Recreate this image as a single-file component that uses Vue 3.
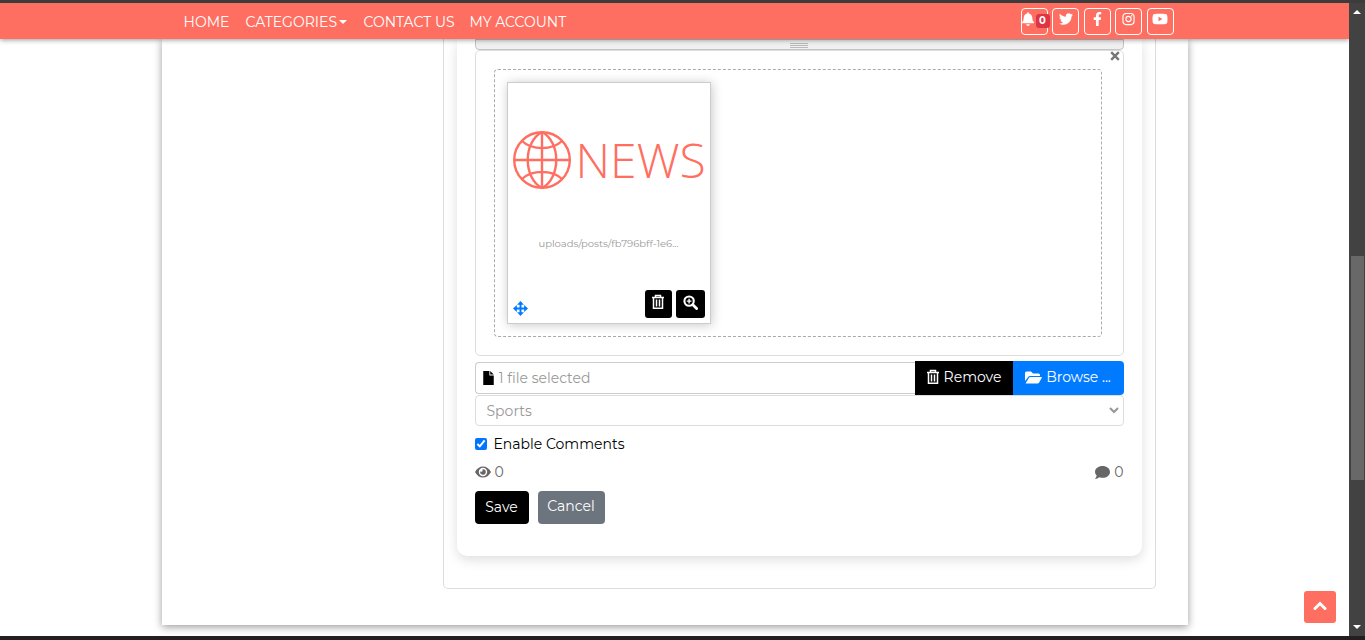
<script setup>
import { ref } from 'vue'

const enableComments = ref(true)
const category = ref('Sports')

const socials = [
  { name: 'Twitter', width: 14, box: '0 0 512 512', d: 'M459 152c0 5 0 9 0 14 0 139-106 299-299 299-59 0-115-17-161-47 8 1 16 1 25 1 49 0 94-17 130-45-46-1-85-31-98-73 7 1 13 2 20 2 9 0 19-1 28-4-48-10-84-52-84-103v-1c14 8 30 13 47 13-28-19-47-51-47-87 0-19 5-37 14-53 52 64 130 105 217 110-2-8-3-16-3-24 0-58 47-105 105-105 30 0 58 13 77 33 24-5 46-13 67-25-8 24-24 45-46 58 21-2 42-8 61-16-14 21-32 39-53 53z' },
  { name: 'Facebook', width: 9, box: '0 0 320 512', d: 'M279 288l14-93h-89v-60c0-25 12-50 52-50h41V7S260 0 225 0c-73 0-121 44-121 125v70H23v93h81v224h100V288z' },
  { name: 'Instagram', width: 13, box: '0 0 448 512', d: 'M224 141a115 115 0 1 0 0 230 115 115 0 0 0 0-230zm0 190a75 75 0 1 1 0-150 75 75 0 0 1 0 150zM371 136a27 27 0 1 1-54 0 27 27 0 0 1 54 0zM132 32h184c75 0 132 57 132 132v184c0 75-57 132-132 132H132C57 480 0 423 0 348V164C0 89 57 32 132 32zm8 42c-60 0-98 38-98 98v168c0 60 38 98 98 98h168c60 0 98-38 98-98V172c0-60-38-98-98-98z' },
  { name: 'YouTube', width: 16, box: '0 0 576 512', d: 'M550 124c-6-24-25-42-49-49C458 64 288 64 288 64S118 64 75 75c-24 7-43 25-49 49-12 43-12 132-12 132s0 90 12 133c6 23 25 41 49 47 43 12 213 12 213 12s170 0 213-12c24-6 43-24 49-47 12-43 12-133 12-133s0-89-12-132zM232 338V175l143 81z' }
]
</script>

<template>
  <div class="screen">
    <div class="viewport">
      <header class="navbar">
        <div class="navbar-inner">
          <nav class="menu">
            <a href="#">HOME</a>
            <a href="#">CATEGORIES<span class="caret"></span></a>
            <a href="#">CONTACT US</a>
            <a href="#">MY ACCOUNT</a>
          </nav>
          <div class="socials">
            <a href="#" class="social bell" aria-label="Notifications">
              <svg viewBox="0 0 448 512" width="12" height="14"><path fill="currentColor" d="M224 512c35 0 64-29 64-64H160c0 35 29 64 64 64zm215-150c-19-20-55-51-55-154 0-77-54-139-128-154V32a32 32 0 1 0-64 0v22C118 69 64 131 64 208c0 103-36 134-55 154-6 6-9 14-9 22 0 16 13 32 32 32h384c19 0 32-16 32-32 0-8-3-16-9-22z" /></svg>
              <span class="badge">0</span>
            </a>
            <a v-for="s in socials" :key="s.name" href="#" class="social" :aria-label="s.name">
              <svg :viewBox="s.box" :width="s.width" height="14"><path fill="currentColor" fill-rule="evenodd" :d="s.d" /></svg>
            </a>
          </div>
        </div>
      </header>

      <main class="page">
        <section class="panel">
          <form class="card" @submit.prevent>
            <div class="editor-foot"><span class="grip"></span></div>

            <div class="preview">
              <button type="button" class="close" aria-label="Close">
                <svg viewBox="0 0 10 10" width="10" height="10"><path d="M1.2 1.2l7.600 7.600M8.800 1.200l-7.600 7.600" stroke="currentColor" stroke-width="2.400" /></svg>
              </button>
              <div class="dropzone">
                <figure class="thumb">
                  <div class="logo">
                    <svg viewBox="1 1 58 58" width="58" height="58" fill="none" stroke="currentColor" stroke-width="2.400">
                      <circle cx="30" cy="30" r="27.800" />
                      <path d="M30 2C11 12 11 48 30 58M30 2c19 10 19 46 0 56" />
                      <path d="M30 2v56M2 30h56M10 11c10 9.500 30 9.500 40 0M10 49c10-9.500 30-9.500 40 0" />
                    </svg>
                    <span>NEWS</span>
                  </div>
                  <figcaption>uploads/posts/fb796bff-1e6...</figcaption>
                  <div class="thumb-foot">
                    <svg class="move" viewBox="0 0 14 14" width="15" height="15"><path fill="none" stroke="currentColor" stroke-width="1.800" d="M7 2v10M2 7h10" /><path fill="currentColor" d="M7 0l3.200 3.600H3.800zM7 14l3.200-3.600H3.800zM0 7l3.600-3.200v6.400zM14 7l-3.600-3.200v6.400z" /></svg>
                    <button type="button" class="tool" aria-label="Remove file">
                      <svg viewBox="0 0 14 16" width="14" height="16"><path fill="none" stroke="currentColor" stroke-width="1.500" d="M1 3.500h12M4.500 3V1.500h5V3M2.500 4v10.200h9V4M5.500 5.500v7M8.500 5.500v7" /></svg>
                    </button>
                    <button type="button" class="tool zoom" aria-label="View details">
                      <svg viewBox="0 0 16 16" width="15" height="15"><g fill="none" stroke="currentColor"><circle cx="6.500" cy="6.500" r="5" stroke-width="2.200" /><path d="M10.500 10.500l4 4" stroke-width="3" stroke-linecap="round" /><path d="M6.500 4v5M4 6.500h5" stroke-width="1.500" /></g></svg>
                    </button>
                  </div>
                </figure>
              </div>
            </div>

            <div class="file-row">
              <div class="file-name">
                <svg viewBox="0 0 12 16" width="11" height="14"><path fill="currentColor" d="M0 0h7v5h5v11H0zM8 0l4 4H8z" /></svg>
                <input type="text" value="1 file selected" aria-label="Selected file" readonly />
              </div>
              <button type="button" class="remove">
                <svg viewBox="0 0 14 16" width="14" height="16"><path fill="none" stroke="currentColor" stroke-width="1.500" d="M1 3.500h12M4.500 3V1.500h5V3M2.500 4v10.200h9V4M5.500 5.500v7M8.500 5.500v7" /></svg>
                Remove
              </button>
              <button type="button" class="browse">
                <svg viewBox="0 0 17 13" width="17" height="13"><path fill="currentColor" d="M0 10V2Q0 .5 1.500.5H6L8 2.500h5.500Q15 2.500 15 4v1H5Q3.700 5 3 6.200zM.8 12L4 6.700Q4.400 6 5.200 6H16.300Q17.200 6 16.700 6.900L14 11.700Q13.500 12.500 12.600 12.500H1.100Q.5 12.500.8 12z" /></svg>
                Browse ...
              </button>
            </div>

            <div class="select-wrap">
              <select v-model="category" aria-label="Category">
                <option>Sports</option>
              </select>
              <svg viewBox="0 0 10 7" width="10" height="7"><path d="M1 1l4 4 4-4" fill="none" stroke="currentColor" stroke-width="2.200" /></svg>
            </div>

            <div class="check">
              <input id="comments" v-model="enableComments" type="checkbox" />
              <label for="comments">Enable Comments</label>
            </div>

            <div class="stats">
              <span>
                <svg viewBox="0 0 16 12" width="16" height="12"><path fill="currentColor" fill-rule="evenodd" d="M0 6Q3 .5 8 .5T16 6Q13 11.500 8 11.500T0 6zM8 1.800a4.200 4.200 0 1 0 0 8.400 4.200 4.200 0 0 0 0-8.400z" /><path fill="currentColor" d="M8 3.200a2.800 2.800 0 1 1-2.700 2.100 1.400 1.400 0 0 0 2-2z" /></svg>
                0
              </span>
              <span>
                <svg viewBox="0 0 15 13" width="15" height="13"><path fill="currentColor" d="M7.500 0C11.600 0 15 2.600 15 5.900s-3.400 5.900-7.500 5.900q-1.700 0-3.200-.6Q2.500 12.700 0 12.900 1.300 11.400 1.700 9.600 0 8 0 5.900C0 2.600 3.400 0 7.500 0z" /></svg>
                0
              </span>
            </div>

            <div class="actions">
              <button type="submit" class="save">Save</button>
              <button type="button" class="cancel">Cancel</button>
            </div>
          </form>
        </section>
      </main>

      <button type="button" class="to-top" aria-label="Back to top">
        <svg viewBox="0 0 14 10" width="14" height="10"><path d="M2 7.500l5-5 5 5" fill="none" stroke="currentColor" stroke-width="3" stroke-linecap="round" /></svg>
      </button>
    </div>

    <div class="scrollbar" aria-hidden="true">
      <span class="arrow up"></span>
      <span class="track"><span class="handle"></span></span>
      <span class="arrow down"></span>
    </div>
  </div>
</template>

<style>
body {
  background: #fff;
}
</style>

<style scoped>
* {
  box-sizing: border-box;
}
.screen {
  display: flex;
  min-height: 100vh;
  border-top: 3px solid #3c3c3c;
  border-bottom: 4px solid #231f20;
  font-family: Montserrat, Inter, "Open Sans", sans-serif;
  font-size: 14px;
  line-height: 20px;
  color: #000;
}
.viewport {
  position: relative;
  flex: 1;
  min-width: 0;
  overflow: hidden;
}
a {
  color: inherit;
  text-decoration: none;
}
button,
input,
select {
  font: inherit;
}
button {
  display: flex;
  align-items: center;
  justify-content: center;
  border: 0;
  padding: 0;
  color: #fff;
}
svg {
  flex: none;
}

.navbar {
  position: relative;
  z-index: 1;
  background: #ff6f61;
  color: #fff;
  box-shadow: 0 1px 5px rgba(0, 0, 0, 0.4);
}
.navbar-inner {
  display: flex;
  justify-content: space-between;
  align-items: center;
  max-width: 1026px;
  height: 36px;
  margin: 0 auto;
  padding: 0 14px 0 22px;
}
.menu {
  display: grid;
  grid-template-columns: 44px 100px 88px 93px;
  gap: 18px;
  padding-top: 2px;
  white-space: nowrap;
}
.menu a {
  display: flex;
  align-items: center;
  gap: 2px;
}
.caret {
  border: 4px solid transparent;
  border-top-color: currentColor;
  border-bottom: 0;
}
.socials {
  display: flex;
  justify-content: space-between;
  width: 153px;
}
.social {
  position: relative;
  display: flex;
  justify-content: center;
  width: 27px;
  height: 27px;
  padding-top: 3px;
  border: 1px solid #fff;
  border-radius: 4px;
}
.bell {
  justify-content: flex-start;
}
.badge {
  position: absolute;
  top: 5px;
  left: 14px;
  width: 14px;
  height: 14px;
  border-radius: 3px;
  background: #dc3545;
  font-size: 10px;
  font-weight: 700;
  line-height: 14px;
  text-align: center;
}

.page {
  max-width: 1026px;
  margin: 0 auto 11px;
  padding: 0 32px 36px 281px;
  background: #fff;
  box-shadow: 0 2px 8px rgba(0, 0, 0, 0.4);
}
.panel {
  padding: 0 13px 32px;
  border: 1px solid #dcdcdc;
  border-top: 0;
  border-radius: 0 0 5px 5px;
}
.card {
  padding: 0 18px 32px;
  border-radius: 0 0 10px 10px;
  box-shadow: 0 4px 12px rgba(0, 0, 0, 0.13);
}
.editor-foot {
  display: flex;
  justify-content: center;
  height: 11px;
  padding-top: 3px;
  border: 1px solid #c4c4c4;
  border-radius: 0 0 4px 4px;
  background: #f0f0f0;
}
.grip {
  width: 18px;
  height: 5px;
  background: repeating-linear-gradient(#bbb 0 1px, #f0f0f0 1px 2px);
}
.preview {
  position: relative;
  padding: 18px 21px 18px 18px;
  border: 1px solid #ddd;
  border-radius: 5px;
}
.close {
  position: absolute;
  top: 0;
  right: 3px;
  width: 10px;
  height: 10px;
  background: none;
  color: #777;
}
.dropzone {
  padding: 12px;
  border: 1px dashed #aaa;
  border-radius: 4px;
}
.thumb {
  width: 204px;
  margin: 0;
  padding: 47px 5px 5px;
  border: 1px solid #ccc;
  box-shadow: 1px 1px 10px rgba(0, 0, 0, 0.22);
}
.logo {
  display: flex;
  align-items: center;
  gap: 5px;
  height: 60px;
  color: #ff6f61;
  font-family: "Open Sans", sans-serif;
  font-size: 48px;
  font-weight: 300;
  line-height: 60px;
}
figcaption {
  margin-top: 44px;
  color: #999;
  font-size: 10px;
  text-align: center;
}
.thumb-foot {
  display: flex;
  align-items: flex-end;
  gap: 4px;
  margin-top: 36px;
}
.move {
  margin: 0 auto 2px 0;
  color: #007bff;
}
.tool {
  width: 27px;
  height: 28px;
  padding-bottom: 4px;
  border-radius: 3px;
  background: #000;
}
.zoom {
  width: 29px;
}
.file-row {
  display: flex;
  align-items: center;
  margin-top: 5px;
}
.file-name {
  display: flex;
  flex: 1;
  align-items: center;
  gap: 5px;
  height: 32px;
  padding-left: 7px;
  border: 1px solid #ccc;
  border-right: 0;
  border-radius: 4px 0 0 4px;
}
.file-name input {
  flex: 1;
  min-width: 0;
  border: 0;
  padding: 0;
  color: #999;
  outline: 0;
}
.remove,
.browse {
  gap: 4px;
  height: 34px;
  padding-bottom: 2px;
}
.remove {
  width: 98px;
  background: #000;
}
.browse {
  width: 111px;
  border-radius: 0 4px 4px 0;
  background: #007bff;
}
.select-wrap {
  position: relative;
  color: #999;
}
.select-wrap select {
  display: block;
  width: 100%;
  height: 31px;
  padding: 0 11px;
  border: 1px solid #ddd;
  border-radius: 4px;
  background: #fff;
  color: #999;
  appearance: none;
}
.select-wrap svg {
  position: absolute;
  top: 12px;
  right: 5px;
}
.check {
  display: flex;
  align-items: center;
  gap: 7px;
  margin-top: 8px;
}
.check input {
  width: 12px;
  height: 12px;
  margin: 0;
  accent-color: #0075ff;
}
.stats {
  display: flex;
  justify-content: space-between;
  margin-top: 8px;
  color: #666;
}
.stats span {
  display: flex;
  align-items: center;
  gap: 4px;
}
.actions {
  display: flex;
  gap: 9px;
  margin-top: 9px;
}
.save,
.cancel {
  height: 33px;
  border-radius: 4px;
}
.save {
  width: 54px;
  padding-bottom: 1px;
  background: #000;
}
.cancel {
  width: 67px;
  padding-bottom: 3px;
  background: #6c757d;
}
.to-top {
  position: absolute;
  right: 13px;
  bottom: 13px;
  width: 32px;
  height: 32px;
  padding-bottom: 2px;
  border-radius: 3px;
  background: #ff6f61;
}

.scrollbar {
  display: flex;
  flex-direction: column;
  align-items: center;
  justify-content: space-between;
  width: 16px;
  padding: 7px 0;
  background: #424242;
}
.arrow {
  border: 4px solid transparent;
}
.up {
  border-top: 0;
  border-bottom-color: #fff;
}
.down {
  border-bottom: 0;
  border-top-color: #fff;
}
.track {
  flex: 1;
  width: 13px;
  padding-top: 242px;
}
.handle {
  display: block;
  height: 224px;
  background: #686868;
}
</style>
